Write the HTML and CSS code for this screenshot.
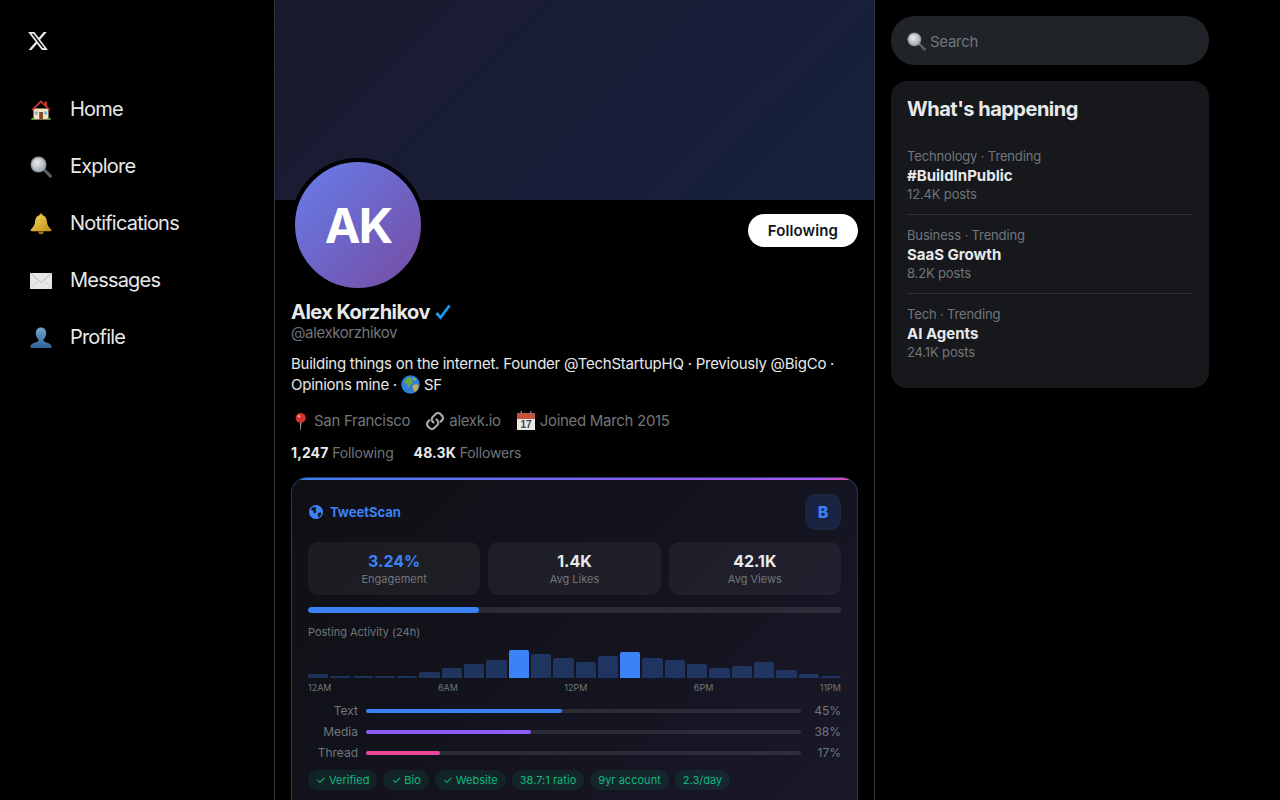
FILE: index.html
```html
<!DOCTYPE html>
<html lang="en">
<head>
    <meta charset="UTF-8">
    <meta name="viewport" content="width=device-width, initial-scale=1.0">
    <title>Alex Korzhikov / X</title>
    <link rel="stylesheet" href="styles.css">
</head>
<body>
    <svg class="defs" width="0" height="0" aria-hidden="true">
        <defs>
            <radialGradient id="glass" cx="40%" cy="35%" r="70%">
                <stop offset="0" stop-color="#e8ecee"/>
                <stop offset="1" stop-color="#a3adb3"/>
            </radialGradient>
            <linearGradient id="gold" x1="0" y1="0" x2="1" y2="1">
                <stop offset="0" stop-color="#f8d862"/>
                <stop offset="1" stop-color="#c08c12"/>
            </linearGradient>
            <linearGradient id="bust" x1="0" y1="0" x2="0" y2="1">
                <stop offset="0" stop-color="#6fa3cf"/>
                <stop offset="1" stop-color="#2f6596"/>
            </linearGradient>
            <symbol id="i-search" viewBox="0 0 22 22">
                <path d="M12 13.500l2-2 7.500 7.500a1.500 1.500 0 0 1-2.200 2.200z" fill="#5a6065"/>
                <circle cx="8.500" cy="8.500" r="8" fill="#8f989e"/>
                <circle cx="8.500" cy="8.500" r="6.600" fill="url(#glass)"/>
            </symbol>
            <symbol id="i-earth" viewBox="0 0 20 20">
                <circle cx="10" cy="10" r="9.800" fill="#2f7fd6"/>
                <path d="M4 5.500l4-3 4 .5-1 3 2 1.500-3 2.500-1 3-2-1-1-3-3-1z" fill="#6fa83c"/>
                <path d="M12 11l4-1.500 2.500 1.500-1.500 5-3 2-1-3z" fill="#d0ab52"/>
                <path d="M13 2.500l3 2-1 1.500-2.500-1z" fill="#8cc152"/>
            </symbol>
        </defs>
    </svg>

    <div class="layout">
        <aside class="sidebar">
            <div class="logo">
                <svg viewBox="0 0 24 24" width="22" height="22"><path fill="#e7e9ea" d="M18.244 2.250h3.308l-7.227 8.260 8.502 11.240H16.170l-5.214-6.817L4.990 21.750H1.680l7.730-8.835L1.254 2.250H8.080l4.713 6.231zm-1.161 17.520h1.833L7.084 4.126H5.117z"/></svg>
            </div>
            <nav class="nav">
                <a class="nav-item" href="#">
                    <span class="nav-icon">
                        <svg viewBox="0 0 22 22" width="22" height="22">
                            <path d="M3.500 9.500h15V20.500h-15z" fill="#f5e2bd"/>
                            <path d="M11 1L1.500 10.500l1.200 1.200L11 3.800l8.300 7.900 1.200-1.200-3.500-3.500V2.500h-2.500v2.400z" fill="#c0392b"/>
                            <path d="M9.200 13h3.800v7.500H9.200z" fill="#7d4a2a"/>
                            <path d="M4.800 12.500h3v3h-3zM14.200 12.500h3v3h-3z" fill="#79b2de"/>
                            <path d="M1 20.800c.3-2.300 2.600-2.500 3.700-1.200l.6 1.400zM21 20.800c-.3-2.300-2.600-2.500-3.700-1.200l-.6 1.400z" fill="#5fa347"/>
                        </svg>
                    </span>
                    <span>Home</span>
                </a>
                <a class="nav-item" href="#">
                    <span class="nav-icon"><svg width="22" height="22"><use href="#i-search"/></svg></span>
                    <span>Explore</span>
                </a>
                <a class="nav-item" href="#">
                    <span class="nav-icon">
                        <svg viewBox="0 0 22 22" width="22" height="22">
                            <circle cx="11" cy="1.800" r="1.500" fill="#c9961c"/>
                            <path d="M11 2c4.200 0 5.600 3 5.900 6.500.3 3.600 1.800 5.600 4.300 8 .7.900.1 1.700-1 1.700H1.800c-1.100 0-1.700-.8-1-1.700 2.500-2.400 4-4.400 4.300-8C5.400 5 6.800 2 11 2z" fill="url(#gold)"/>
                            <path d="M8.300 18.500h5.400a2.700 2.700 0 0 1-5.400 0z" fill="#a8760f"/>
                        </svg>
                    </span>
                    <span>Notifications</span>
                </a>
                <a class="nav-item" href="#">
                    <span class="nav-icon">
                        <svg viewBox="0 0 22 22" width="22" height="22">
                            <path d="M0 3h22v16H0z" fill="#e6e7e9"/>
                            <path d="M0 3l11 9.500L22 3" fill="none" stroke="#b4b8bc" stroke-width="1"/>
                            <path d="M0 19l8-8.500M22 19l-8-8.500" fill="none" stroke="#c9ccd0" stroke-width=".8"/>
                        </svg>
                    </span>
                    <span>Messages</span>
                </a>
                <a class="nav-item" href="#">
                    <span class="nav-icon">
                        <svg viewBox="0 0 22 22" width="22" height="22">
                            <path d="M11 .5c3.400 0 5.200 2.500 5.200 5.700 0 2.600-1.100 4.800-2.600 6-.5 1.300.2 2.200 2.200 3 2.600 1 5.400 1.700 5.900 4.300.2 1-.5 1.500-1.500 1.500H1.800c-1 0-1.700-.5-1.500-1.500.5-2.600 3.300-3.300 5.900-4.300 2-.8 2.700-1.700 2.200-3-1.500-1.200-2.600-3.400-2.600-6C5.800 3 7.600.5 11 .5z" fill="url(#bust)"/>
                        </svg>
                    </span>
                    <span>Profile</span>
                </a>
            </nav>
        </aside>

        <main class="main">
            <div class="banner"></div>
            <div class="profile-top">
                <div class="avatar">AK</div>
                <button class="follow-btn">Following</button>
            </div>
            <div class="profile">
                <h1 class="name">
                    Alex Korzhikov
                    <svg class="check" viewBox="0 0 16 16" width="16" height="16"><path d="M1.500 9l4 4.500L14.500 1.500" fill="none" stroke="#1d9bf0" stroke-width="2.700"/></svg>
                </h1>
                <div class="handle">@alexkorzhikov</div>
                <p class="bio">
                    Building things on the internet. Founder @TechStartupHQ · Previously @BigCo · Opinions mine ·
                    <svg class="bio-globe" width="19" height="19"><use href="#i-earth"/></svg>
                    SF
                </p>
                <div class="meta">
                    <span class="meta-item">
                        <svg viewBox="0 0 19 19" width="19" height="19">
                            <path d="M9 9h1.400l-.4 9h-.6z" fill="#a9aeb2"/>
                            <circle cx="9.700" cy="6" r="5" fill="#d5352f"/>
                            <circle cx="8" cy="4.200" r="1.300" fill="#f0a09a"/>
                        </svg>
                        San Francisco
                    </span>
                    <span class="meta-item">
                        <svg viewBox="0 0 20 20" width="20" height="20">
                            <g fill="none" stroke="#a4a8ac" stroke-width="2.200" stroke-linecap="round">
                                <path d="M8.500 11.500l-.8-.8a3.300 3.300 0 0 1 0-4.700l3-3a3.300 3.300 0 0 1 4.700 0l1.600 1.600a3.300 3.300 0 0 1 0 4.700l-1.300 1.300"/>
                                <path d="M11.500 8.500l.8.8a3.300 3.300 0 0 1 0 4.700l-3 3a3.300 3.300 0 0 1-4.700 0L3 15.400a3.300 3.300 0 0 1 0-4.700l1.300-1.300"/>
                            </g>
                        </svg>
                        alexk.io
                    </span>
                    <span class="meta-item">
                        <svg viewBox="0 0 20 20" width="20" height="20">
                            <path d="M1 2h18v17H1z" fill="#e8e8e8"/>
                            <path d="M1 2h18v6H1z" fill="#c8503f"/>
                            <path d="M4.500 0h1.500v4H4.500zM14 0h1.500v4H14z" fill="#77797c"/>
                            <text x="10" y="17" text-anchor="middle" class="cal-day">17</text>
                        </svg>
                        Joined March 2015
                    </span>
                </div>
                <div class="stats">
                    <span><strong>1,247</strong> Following</span>
                    <span><strong>48.3K</strong> Followers</span>
                </div>

                <section class="scan">
                    <div class="scan-head">
                        <div class="scan-brand">
                            <svg viewBox="0 0 14 14" width="14" height="14">
                                <circle cx="7" cy="7" r="7" fill="#3b82f6"/>
                                <path d="M3 2.800l3-1 1.500 1.500-1.200 1.700 1.200 1.500-1.500 2-1.300-.5-.2-2-2.500-1.500zM9 8l3-.8.300 2.300-2.300 3-1.200-1.500z" fill="#10131c"/>
                            </svg>
                            TweetScan
                        </div>
                        <div class="scan-badge">B</div>
                    </div>

                    <div class="scan-stats">
                        <div class="scan-stat">
                            <div class="stat-value blue">3.24%</div>
                            <div class="stat-label">Engagement</div>
                        </div>
                        <div class="scan-stat">
                            <div class="stat-value">1.4K</div>
                            <div class="stat-label">Avg Likes</div>
                        </div>
                        <div class="scan-stat">
                            <div class="stat-value">42.1K</div>
                            <div class="stat-label">Avg Views</div>
                        </div>
                    </div>

                    <div class="progress"><div class="progress-fill" style="width: 32%"></div></div>

                    <div class="chart-title">Posting Activity (24h)</div>
                    <div class="chart">
                        <div class="bar" style="height: 4px"></div>
                        <div class="bar" style="height: 2px"></div>
                        <div class="bar" style="height: 2px"></div>
                        <div class="bar" style="height: 2px"></div>
                        <div class="bar" style="height: 2px"></div>
                        <div class="bar" style="height: 6px"></div>
                        <div class="bar" style="height: 10px"></div>
                        <div class="bar" style="height: 14px"></div>
                        <div class="bar" style="height: 18px"></div>
                        <div class="bar peak" style="height: 28px"></div>
                        <div class="bar" style="height: 24px"></div>
                        <div class="bar" style="height: 20px"></div>
                        <div class="bar" style="height: 16px"></div>
                        <div class="bar" style="height: 22px"></div>
                        <div class="bar peak" style="height: 26px"></div>
                        <div class="bar" style="height: 20px"></div>
                        <div class="bar" style="height: 18px"></div>
                        <div class="bar" style="height: 14px"></div>
                        <div class="bar" style="height: 10px"></div>
                        <div class="bar" style="height: 12px"></div>
                        <div class="bar" style="height: 16px"></div>
                        <div class="bar" style="height: 8px"></div>
                        <div class="bar" style="height: 4px"></div>
                        <div class="bar" style="height: 2px"></div>
                    </div>
                    <div class="chart-axis">
                        <span>12AM</span>
                        <span>6AM</span>
                        <span>12PM</span>
                        <span>6PM</span>
                        <span>11PM</span>
                    </div>

                    <div class="mix">
                        <div class="mix-row">
                            <span class="mix-label">Text</span>
                            <div class="mix-track"><div class="mix-fill blue-bg" style="width: 45%"></div></div>
                            <span class="mix-value">45%</span>
                        </div>
                        <div class="mix-row">
                            <span class="mix-label">Media</span>
                            <div class="mix-track"><div class="mix-fill purple-bg" style="width: 38%"></div></div>
                            <span class="mix-value">38%</span>
                        </div>
                        <div class="mix-row">
                            <span class="mix-label">Thread</span>
                            <div class="mix-track"><div class="mix-fill pink-bg" style="width: 17%"></div></div>
                            <span class="mix-value">17%</span>
                        </div>
                    </div>

                    <div class="chips">
                        <span class="chip">✓ Verified</span>
                        <span class="chip">✓ Bio</span>
                        <span class="chip">✓ Website</span>
                        <span class="chip">38.7:1 ratio</span>
                        <span class="chip">9yr account</span>
                        <span class="chip">2.3/day</span>
                    </div>
                </section>
            </div>
        </main>

        <aside class="right">
            <div class="search">
                <svg width="19" height="19"><use href="#i-search"/></svg>
                <span>Search</span>
            </div>
            <div class="trends">
                <h2>What's happening</h2>
                <div class="trend">
                    <div class="trend-cat">Technology · Trending</div>
                    <div class="trend-name">#BuildInPublic</div>
                    <div class="trend-count">12.4K posts</div>
                </div>
                <div class="trend">
                    <div class="trend-cat">Business · Trending</div>
                    <div class="trend-name">SaaS Growth</div>
                    <div class="trend-count">8.2K posts</div>
                </div>
                <div class="trend">
                    <div class="trend-cat">Tech · Trending</div>
                    <div class="trend-name">AI Agents</div>
                    <div class="trend-count">24.1K posts</div>
                </div>
            </div>
        </aside>
    </div>
</body>
</html>
```

FILE: styles.css
```css
* {
    margin: 0;
    padding: 0;
    box-sizing: border-box;
}

html, body {
    height: 100%;
    overflow: hidden;
}

body {
    font-family: Inter, "Liberation Sans", sans-serif;
    background: #000;
    color: #e7e9ea;
}

.defs {
    position: absolute;
}

.layout {
    display: grid;
    grid-template-columns: 274px 601px 350px;
    height: 100%;
}

/* left nav */
.sidebar {
    padding: 16px;
}

.logo {
    height: 50px;
    margin-bottom: 15px;
    padding: 14px 0 0 11px;
}

.logo svg {
    display: block;
}

.nav-item {
    display: flex;
    align-items: center;
    gap: 16px;
    padding: 16px 12px;
    font-size: 20px;
    line-height: 25px;
    letter-spacing: -0.8px;
    color: #e7e9ea;
    text-decoration: none;
}

.nav-icon {
    display: flex;
    justify-content: center;
    width: 26px;
}

/* middle column */
.main {
    border-left: 1px solid #2f3336;
    border-right: 1px solid #2f3336;
    overflow: hidden;
}

.banner {
    height: 200px;
    background: linear-gradient(135deg, #1a1a2e, #16213e);
}

.profile-top {
    display: flex;
    justify-content: space-between;
    align-items: flex-start;
    padding: 0 16px;
}

.avatar {
    width: 134px;
    height: 134px;
    margin-top: -42px;
    border: 4px solid #000;
    border-radius: 50%;
    background: linear-gradient(135deg, #667eea, #764ba2);
    display: flex;
    align-items: center;
    justify-content: center;
    font-size: 48px;
    font-weight: 700;
    letter-spacing: -2px;
    color: #fff;
}

.follow-btn {
    margin-top: 14px;
    height: 33px;
    padding: 0 20px;
    border: none;
    border-radius: 17px;
    background: #fff;
    color: #0f1419;
    font-family: inherit;
    font-size: 15px;
    font-weight: 600;
    letter-spacing: 0.1px;
    cursor: pointer;
}

.profile {
    padding: 8px 16px 0;
}

.name {
    display: flex;
    align-items: center;
    gap: 5px;
    font-size: 20px;
    line-height: 24px;
    font-weight: 700;
    letter-spacing: -0.55px;
}

.handle {
    font-size: 15px;
    line-height: 18px;
    letter-spacing: -0.38px;
    color: #71767b;
}

.bio {
    margin-top: 11px;
    font-size: 15px;
    line-height: 21px;
    letter-spacing: -0.25px;
}

.bio-globe {
    vertical-align: -4px;
}

.meta {
    display: flex;
    gap: 15px;
    margin-top: 16px;
    font-size: 15px;
    line-height: 20px;
    letter-spacing: -0.3px;
    color: #71767b;
}

.meta-item {
    display: flex;
    align-items: center;
    gap: 4px;
}

.cal-day {
    font-family: "Liberation Sans", sans-serif;
    font-size: 10px;
    font-weight: 700;
    letter-spacing: 0;
    fill: #3c4146;
}

.stats {
    display: flex;
    gap: 20px;
    margin-top: 13px;
    font-size: 14px;
    line-height: 17px;
    letter-spacing: -0.15px;
    color: #71767b;
}

.stats strong {
    color: #e7e9ea;
    font-weight: 700;
    letter-spacing: 0.1px;
}

/* analytics card, runs on below the fold */
.scan {
    position: relative;
    margin-top: 16px;
    padding: 16px 16px 48px;
    border: 1px solid rgba(59, 130, 246, 0.35);
    border-radius: 16px;
    background: linear-gradient(135deg, #0f0f14, #1a1a2e 120%);
    overflow: hidden;
}

.scan::before {
    content: "";
    position: absolute;
    top: 0;
    left: 0;
    right: 0;
    height: 2px;
    background: linear-gradient(90deg, #3b82f6, #8b5cf6 60%, #a855f7 92%, #ec4899);
}

.scan-head {
    display: flex;
    justify-content: space-between;
    align-items: center;
}

.scan-brand {
    display: flex;
    align-items: center;
    gap: 7px;
    padding-left: 1px;
    font-size: 13px;
    font-weight: 700;
    color: #3b82f6;
}

.scan-badge {
    width: 36px;
    height: 36px;
    border-radius: 10px;
    background: rgba(59, 130, 246, 0.15);
    color: #3b82f6;
    display: flex;
    align-items: center;
    justify-content: center;
    font-size: 16px;
    font-weight: 800;
}

.scan-stats {
    display: grid;
    grid-template-columns: repeat(3, 1fr);
    gap: 8px;
    margin-top: 12px;
}

.scan-stat {
    height: 53px;
    padding-top: 10px;
    border-radius: 10px;
    background: rgba(255, 255, 255, 0.05);
    text-align: center;
}

.stat-value {
    font-size: 16px;
    line-height: 19px;
    font-weight: 700;
    color: #e7e9ea;
}

.stat-value.blue {
    color: #3b82f6;
}

.stat-label {
    margin-top: 2px;
    font-size: 11px;
    line-height: 13px;
    color: #71767b;
}

.progress {
    height: 6px;
    margin-top: 12px;
    border-radius: 3px;
    background: rgba(255, 255, 255, 0.1);
    overflow: hidden;
}

.progress-fill {
    height: 100%;
    border-radius: 3px;
    background: #3b82f6;
}

.chart-title {
    margin-top: 12px;
    font-size: 11px;
    line-height: 14px;
    color: #71767b;
}

.chart {
    display: flex;
    align-items: flex-end;
    gap: 2px;
    height: 32px;
    margin-top: 7px;
}

.bar {
    flex: 1;
    border-radius: 2px 2px 0 0;
    background: rgba(59, 130, 246, 0.3);
}

.bar.peak {
    background: #3b82f6;
}

.chart-axis {
    display: flex;
    justify-content: space-between;
    margin-top: 4px;
    font-size: 9px;
    line-height: 11px;
    color: #71767b;
}

.mix {
    display: flex;
    flex-direction: column;
    gap: 6px;
    margin-top: 10px;
}

.mix-row {
    display: flex;
    align-items: center;
    gap: 8px;
    font-size: 12px;
    line-height: 15px;
    color: #71767b;
}

.mix-label {
    width: 50px;
    text-align: right;
}

.mix-track {
    flex: 1;
    height: 4px;
    border-radius: 2px;
    background: rgba(255, 255, 255, 0.1);
}

.mix-fill {
    height: 100%;
    border-radius: 2px;
}

.blue-bg {
    background: #3b82f6;
}

.purple-bg {
    background: #8b5cf6;
}

.pink-bg {
    background: #ec4899;
}

.mix-value {
    width: 32px;
    text-align: right;
}

.chips {
    display: flex;
    gap: 6px;
    margin-top: 10px;
}

.chip {
    padding: 3px 8px;
    border-radius: 10px;
    background: rgba(16, 185, 129, 0.1);
    color: #10b981;
    font-size: 11px;
    line-height: 14px;
    letter-spacing: 0.03px;
}

/* right column */
.right {
    padding: 16px;
}

.search {
    display: flex;
    align-items: center;
    gap: 4px;
    height: 49px;
    padding: 1px 16px 0;
    border-radius: 24px;
    background: #202327;
    font-size: 15px;
    letter-spacing: -0.3px;
    color: #71767b;
}

.trends {
    margin-top: 16px;
    padding: 16px;
    border-radius: 16px;
    background: #16181c;
}

.trends h2 {
    margin-bottom: 15px;
    font-size: 20px;
    line-height: 24px;
    font-weight: 700;
    letter-spacing: -0.5px;
}

.trend {
    padding: 11px 0 10px;
    border-bottom: 1px solid #2f3336;
}

.trend:last-child {
    border-bottom: none;
}

.trend-cat, .trend-count {
    font-size: 13px;
    line-height: 19px;
    letter-spacing: -0.15px;
    color: #71767b;
}

.trend-name {
    font-size: 15px;
    line-height: 19px;
    font-weight: 700;
}
```
